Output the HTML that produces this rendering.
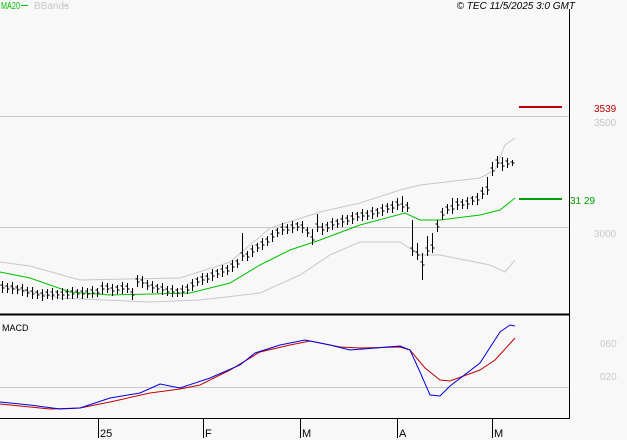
<!DOCTYPE html><html><head><style>
body{margin:0;background:#f8f8f8;width:627px;height:440px;overflow:hidden;font-family:"Liberation Sans",sans-serif}
svg{position:absolute;left:0;top:0}
</style></head><body>
<svg width="627" height="440" xmlns="http://www.w3.org/2000/svg">
<rect width="627" height="440" fill="#f8f8f8"/>
<line x1="0" y1="116.5" x2="569" y2="116.5" stroke="#c8c8c8"/>
<line x1="0" y1="227.5" x2="569" y2="227.5" stroke="#c8c8c8"/>
<line x1="0" y1="387.5" x2="569" y2="387.5" stroke="#c8c8c8"/>
<line x1="569.5" y1="9" x2="569.5" y2="419" stroke="#000"/>
<line x1="0" y1="314.5" x2="570" y2="314.5" stroke="#000" stroke-width="2"/>
<line x1="0" y1="418.5" x2="570" y2="418.5" stroke="#000"/>
<g stroke="#000"><line x1="98.5" y1="418" x2="98.5" y2="438"/><line x1="203.5" y1="418" x2="203.5" y2="438"/><line x1="300.5" y1="418" x2="300.5" y2="438"/><line x1="397.5" y1="418" x2="397.5" y2="438"/><line x1="492.5" y1="418" x2="492.5" y2="438"/></g>
<g font-size="11" fill="#000"><text x="100" y="437">25</text><text x="205" y="437">F</text><text x="302" y="437">M</text><text x="399" y="437">A</text><text x="494" y="437">M</text></g>
<text x="1" y="9" font-size="10" fill="#00c000" textLength="19" lengthAdjust="spacingAndGlyphs">MA20</text><line x1="21" y1="5.5" x2="28" y2="5.5" stroke="#00c000"/>
<text x="34" y="9" font-size="10" fill="#c8c8c8">BBands</text><line x1="62" y1="5.5" x2="68" y2="5.5" stroke="#c8c8c8"/>
<text x="575" y="9" font-size="10" font-style="italic" fill="#000" text-anchor="end">© TEC 11/5/2025 3:0 GMT</text>
<line x1="519" y1="107" x2="562" y2="107" stroke="#c00000" stroke-width="2"/>
<text x="594" y="112" font-size="10" fill="#c00000">3539</text>
<line x1="519" y1="199" x2="562" y2="199" stroke="#00a000" stroke-width="2"/>
<text x="570" y="204" font-size="10" fill="#00a000">31 29</text>
<g font-size="10" fill="#c8c8c8"><text x="594" y="126">3500</text><text x="594" y="237">3000</text><text x="600" y="347">060</text><text x="600" y="380">020</text></g>
<text x="2" y="331" font-size="9" fill="#000">MACD</text>
<polyline fill="none" stroke="#c8c8c8" points="0,262 30,266 80,280 180,278 230,262 270,228 320,212 360,203 400,190 420,185 480,178 495,170 505,145 515,138"/>
<polyline fill="none" stroke="#c8c8c8" points="0,285 60,298 150,302 200,300 260,293 300,275 330,255 360,242 400,242 420,255 440,255 490,265 505,272 515,260"/>
<polyline fill="none" stroke="#00c000" points="0,272 30,278 70,292 110,295 190,293 230,283 260,265 290,250 320,240 360,225 405,213 420,220 440,220 480,215 500,210 515,198"/>
<path fill="none" stroke="#000" d="M2.5 281v12m0-5h2m-4-3h2M7.5 283v10m0-4h2m-4-3h2M12.5 282v12m0-5h2m-4-3h2M17.5 285v9m0-4h2m-4-3h2M22.5 284v12m0-5h2m-4-3h2M27.5 287v10m0-4h2m-4-3h2M32.5 287v12m0-5h2m-4-3h2M37.5 290v9m0-4h2m-4-3h2M42.5 289v12m0-5h2m-4-3h2M47.5 289v10m0-4h2m-4-3h2M52.5 288v12m0-5h2m-4-3h2M57.5 290v9m0-4h2m-4-3h2M62.5 288v12m0-5h2m-4-3h2M67.5 289v10m0-4h2m-4-3h2M72.5 287v12m0-5h2m-4-3h2M77.5 289v9m0-4h2m-4-3h2M82.5 287v12m0-5h2m-4-3h2M87.5 288v10m0-4h2m-4-3h2M92.5 286v12m0-5h2m-4-3h2M97.5 288v9m0-4h2m-4-3h2M102.5 282v12m0-5h2m-4-3h2M107.5 283v10m0-4h2m-4-3h2M112.5 284v12m0-5h2m-4-3h2M117.5 285v9m0-4h2m-4-3h2M122.5 282v12m0-5h2m-4-3h2M127.5 283v10m0-4h2m-4-3h2M132.5 288v12m0-5h2m-4-3h2M137.5 275v12m0-5h2m-4-3h2M142.5 276v12m0-5h2m-4-3h2M147.5 280v10m0-4h2m-4-3h2M152.5 281v12m0-5h2m-4-3h2M157.5 284v9m0-4h2m-4-3h2M162.5 283v12m0-5h2m-4-3h2M167.5 286v10m0-4h2m-4-3h2M172.5 285v12m0-5h2m-4-3h2M177.5 288v9m0-4h2m-4-3h2M182.5 285v12m0-5h2m-4-3h2M187.5 284v10m0-4h2m-4-3h2M192.5 279v12m0-5h2m-4-3h2M197.5 277v9m0-4h2m-4-3h2M202.5 273v12m0-5h2m-4-3h2M207.5 273v10m0-4h2m-4-3h2M212.5 269v12m0-5h2m-4-3h2M217.5 269v9m0-4h2m-4-3h2M222.5 265v12m0-5h2m-4-3h2M227.5 265v10m0-4h2m-4-3h2M232.5 260v12m0-5h2m-4-3h2M237.5 259v9m0-4h2m-4-3h2M242.5 233v28m0-5h2m-4-3h2M247.5 251v10m0-4h2m-4-3h2M252.5 245v12m0-5h2m-4-3h2M257.5 243v9m0-4h2m-4-3h2M262.5 238v12m0-5h2m-4-3h2M267.5 236v10m0-4h2m-4-3h2M272.5 230v12m0-5h2m-4-3h2M277.5 228v9m0-4h2m-4-3h2M282.5 223v12m0-5h2m-4-3h2M287.5 224v10m0-4h2m-4-3h2M292.5 221v12m0-5h2m-4-3h2M297.5 222v9m0-4h2m-4-3h2M302.5 221v12m0-5h2m-4-3h2M307.5 227v10m0-4h2m-4-3h2M312.5 229v16m0-5h2m-4-3h2M317.5 214v18m0-5h2m-4-3h2M322.5 223v12m0-5h2m-4-3h2M327.5 222v10m0-4h2m-4-3h2M332.5 218v12m0-5h2m-4-3h2M337.5 219v9m0-4h2m-4-3h2M342.5 215v12m0-5h2m-4-3h2M347.5 215v10m0-4h2m-4-3h2M352.5 212v12m0-5h2m-4-3h2M357.5 212v9m0-4h2m-4-3h2M362.5 209v12m0-5h2m-4-3h2M367.5 210v10m0-4h2m-4-3h2M372.5 207v12m0-5h2m-4-3h2M377.5 208v9m0-4h2m-4-3h2M382.5 204v12m0-5h2m-4-3h2M387.5 203v10m0-4h2m-4-3h2M392.5 201v12m0-5h2m-4-3h2M397.5 198v12m0-5h2m-4-3h2M402.5 196v16m0-5h2m-4-3h2M407.5 202v10m0-4h2m-4-3h2M412.5 220v36m0-5h2m-4-3h2M417.5 243v17m0-5h2m-4-3h2M422.5 253v27m0-15h2m-4-3h2M427.5 236v20m0-5h2m-4-3h2M432.5 233v20m0-5h2m-4-3h2M437.5 220v12m0-5h2m-4-3h2M442.5 208v12m0-5h2m-4-3h2M447.5 204v10m0-4h2m-4-3h2M452.5 198v16m0-5h2m-4-3h2M457.5 198v12m0-5h2m-4-3h2M462.5 199v10m0-4h2m-4-3h2M467.5 197v12m0-5h2m-4-3h2M472.5 196v9m0-4h2m-4-3h2M477.5 193v12m0-5h2m-4-3h2M482.5 187v12m0-5h2m-4-3h2M487.5 177v18m0-5h2m-4-3h2M492.5 162v14m0-5h2m-4-3h2M497.5 156v12m0-5h2m-4-3h2M502.5 157v14m0-5h2m-4-3h2M507.5 158v10m0-4h2m-4-3h2M512.5 160v6m0-3h2m-4-1h2"/>
<polyline fill="none" stroke="#c00000" points="0,404 50,409 80,408 110,402 150,393 180,389 200,385 230,370 260,352 290,345 310,341 340,347 360,348 400,347 410,350 425,368 440,380 450,381 480,370 495,360 515,338"/>
<polyline fill="none" stroke="#0000e0" points="0,402 30,405 60,409 80,408 110,398 140,393 160,384 180,388 210,378 240,365 255,353 280,345 305,340 330,345 350,350 400,346 410,350 420,372 430,395 440,396 450,386 480,363 500,332 510,325 515,326"/>
</svg>
</body></html>
